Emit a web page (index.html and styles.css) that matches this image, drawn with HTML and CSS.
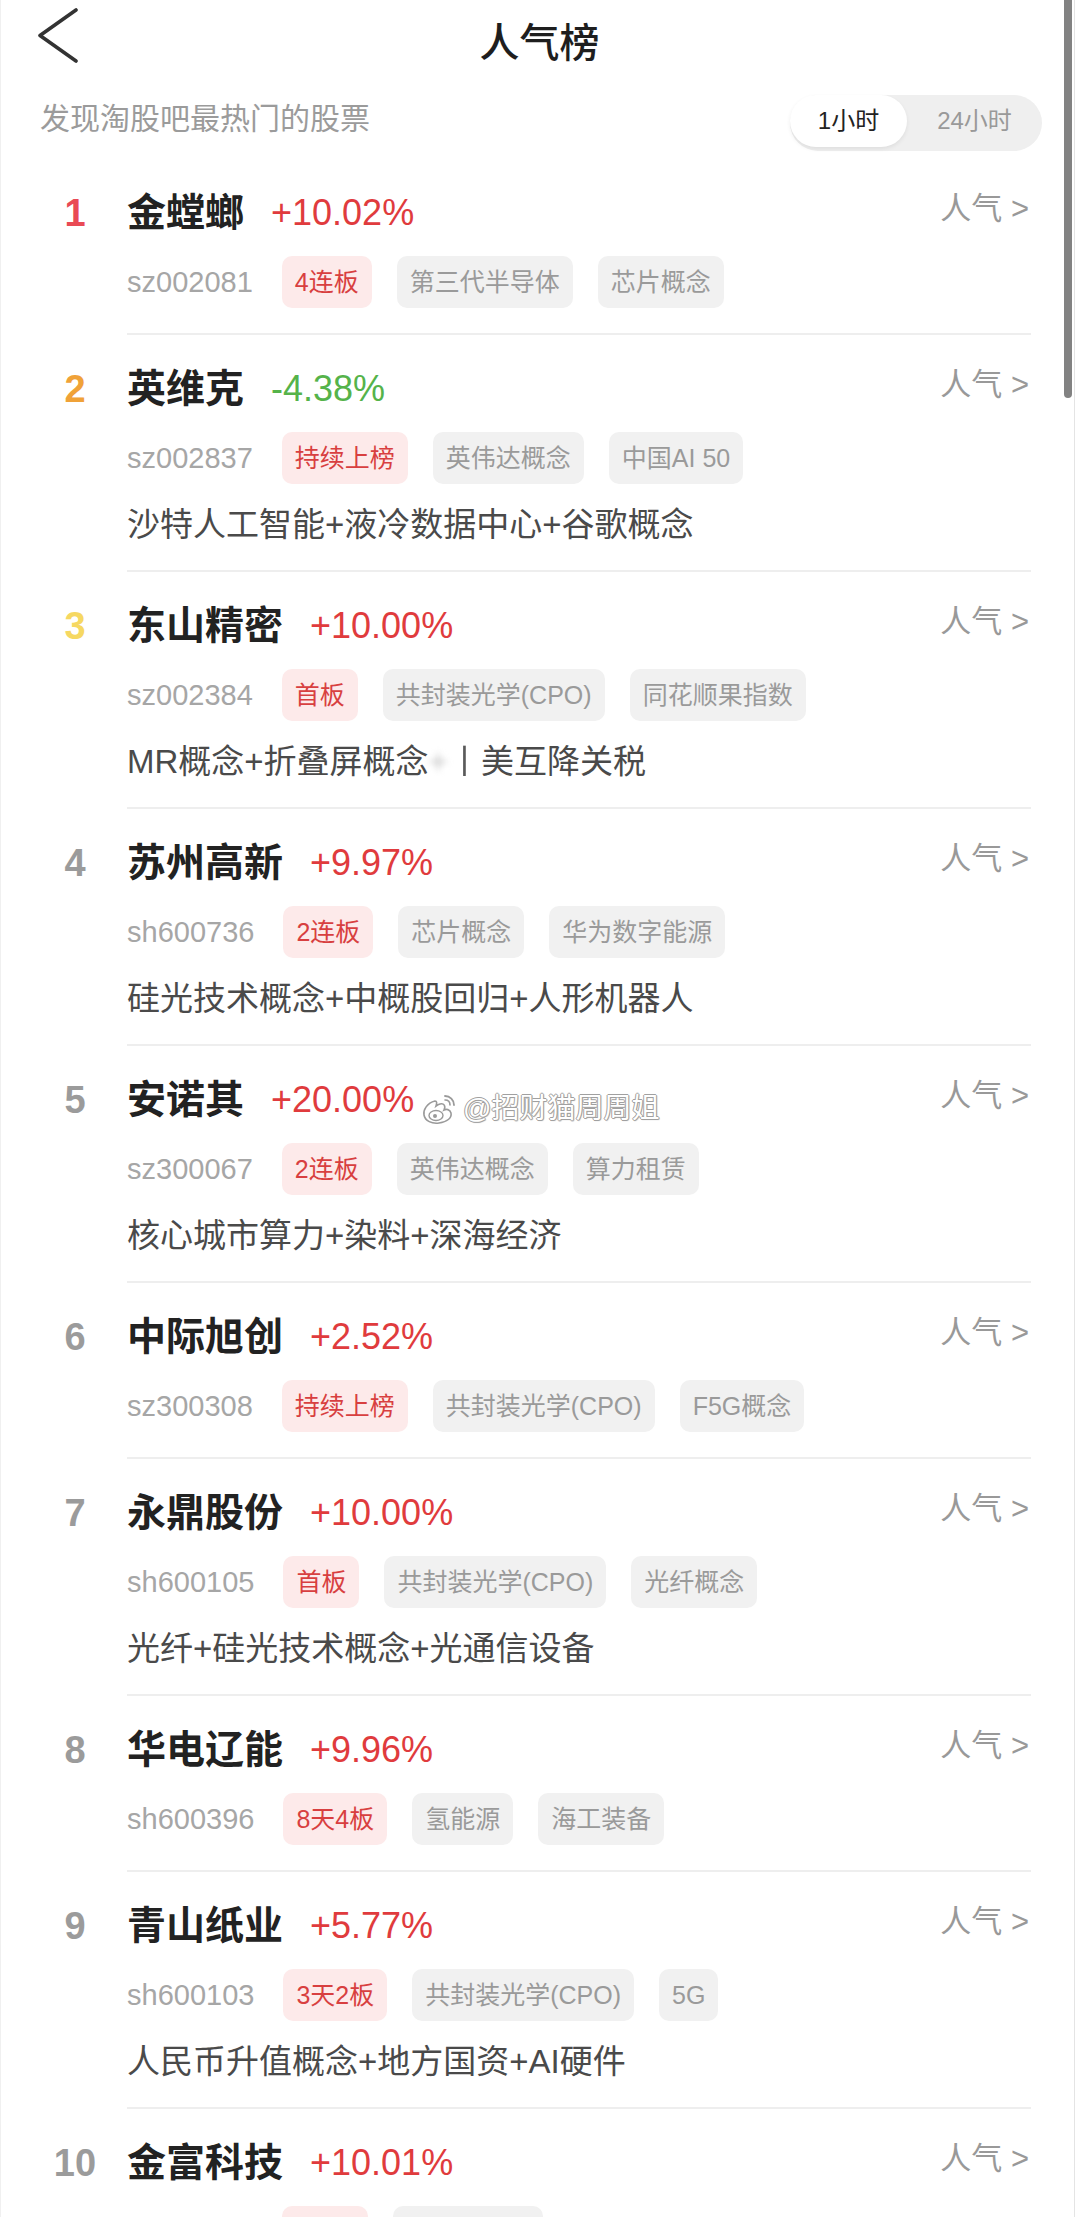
FILE: index.html
```html
<!DOCTYPE html>
<html lang="zh-CN">
<head>
<meta charset="utf-8">
<title>人气榜</title>
<link rel="stylesheet" href="styles.css">
</head>
<body>
<div class="page">
  <header class="topbar">
    <svg class="back" viewBox="0 0 42 56" aria-hidden="true"><path d="M39 2 L3 27.5 L39 53" fill="none" stroke="#333" stroke-width="3.6" stroke-linecap="round" stroke-linejoin="round"/></svg>
    <h1 class="title">人气榜</h1>
    <span class="spacer"></span>
  </header>
  <div class="subbar">
    <p class="subtitle">发现淘股吧最热门的股票</p>
    <div class="toggle"><span class="opt active">1小时</span><span class="opt">24小时</span></div>
  </div>
  <ul class="list">
    <li class="item">
      <span class="rank r1">1</span>
      <div class="body">
        <div class="head"><span class="name">金螳螂</span><span class="pct up">+10.02%</span><span class="pop">人气 &gt;</span></div>
        <div class="meta"><span class="code">sz002081</span><span class="tag hot">4连板</span><span class="tag">第三代半导体</span><span class="tag">芯片概念</span></div>
      </div>
    </li>
    <li class="item">
      <span class="rank r2">2</span>
      <div class="body">
        <div class="head"><span class="name">英维克</span><span class="pct down">-4.38%</span><span class="pop">人气 &gt;</span></div>
        <div class="meta"><span class="code">sz002837</span><span class="tag hot">持续上榜</span><span class="tag">英伟达概念</span><span class="tag">中国AI 50</span></div>
        <p class="concept">沙特人工智能+液冷数据中心+谷歌概念</p>
      </div>
    </li>
    <li class="item">
      <span class="rank r3">3</span>
      <div class="body">
        <div class="head"><span class="name">东山精密</span><span class="pct up">+10.00%</span><span class="pop">人气 &gt;</span></div>
        <div class="meta"><span class="code">sz002384</span><span class="tag hot">首板</span><span class="tag">共封装光学(CPO)</span><span class="tag">同花顺果指数</span></div>
        <p class="concept">MR概念+折叠屏概念<span class="smudge">+</span><span class="smudge-bar">丨</span>美互降关税</p>
      </div>
    </li>
    <li class="item">
      <span class="rank">4</span>
      <div class="body">
        <div class="head"><span class="name">苏州高新</span><span class="pct up">+9.97%</span><span class="pop">人气 &gt;</span></div>
        <div class="meta"><span class="code">sh600736</span><span class="tag hot">2连板</span><span class="tag">芯片概念</span><span class="tag">华为数字能源</span></div>
        <p class="concept">硅光技术概念+中概股回归+人形机器人</p>
      </div>
    </li>
    <li class="item">
      <span class="rank">5</span>
      <div class="body">
        <div class="head"><span class="name">安诺其</span><span class="pct up">+20.00%</span><span class="pop">人气 &gt;</span></div>
        <div class="meta"><span class="code">sz300067</span><span class="tag hot">2连板</span><span class="tag">英伟达概念</span><span class="tag">算力租赁</span></div>
        <p class="concept">核心城市算力+染料+深海经济</p>
      </div>
    </li>
    <li class="item">
      <span class="rank">6</span>
      <div class="body">
        <div class="head"><span class="name">中际旭创</span><span class="pct up">+2.52%</span><span class="pop">人气 &gt;</span></div>
        <div class="meta"><span class="code">sz300308</span><span class="tag hot">持续上榜</span><span class="tag">共封装光学(CPO)</span><span class="tag">F5G概念</span></div>
      </div>
    </li>
    <li class="item">
      <span class="rank">7</span>
      <div class="body">
        <div class="head"><span class="name">永鼎股份</span><span class="pct up">+10.00%</span><span class="pop">人气 &gt;</span></div>
        <div class="meta"><span class="code">sh600105</span><span class="tag hot">首板</span><span class="tag">共封装光学(CPO)</span><span class="tag">光纤概念</span></div>
        <p class="concept">光纤+硅光技术概念+光通信设备</p>
      </div>
    </li>
    <li class="item">
      <span class="rank">8</span>
      <div class="body">
        <div class="head"><span class="name">华电辽能</span><span class="pct up">+9.96%</span><span class="pop">人气 &gt;</span></div>
        <div class="meta"><span class="code">sh600396</span><span class="tag hot">8天4板</span><span class="tag">氢能源</span><span class="tag">海工装备</span></div>
      </div>
    </li>
    <li class="item">
      <span class="rank">9</span>
      <div class="body">
        <div class="head"><span class="name">青山纸业</span><span class="pct up">+5.77%</span><span class="pop">人气 &gt;</span></div>
        <div class="meta"><span class="code">sh600103</span><span class="tag hot">3天2板</span><span class="tag">共封装光学(CPO)</span><span class="tag">5G</span></div>
        <p class="concept">人民币升值概念+地方国资+AI硬件</p>
      </div>
    </li>
    <li class="item">
      <span class="rank">10</span>
      <div class="body">
        <div class="head"><span class="name">金富科技</span><span class="pct up">+10.01%</span><span class="pop">人气 &gt;</span></div>
        <div class="meta"><span class="code code-blank"></span><span class="tag hot tag-blank-s"></span><span class="tag tag-blank-l"></span></div>
      </div>
    </li>
  </ul>

  <div class="watermark">
    <svg class="wb" viewBox="0 0 36 34" aria-hidden="true">
      <path d="M14 9 C6 11 2 18 3 23 C4 29 11 32 18 31 C26 30 31 26 30 21 C29 17 25 17 23 18 C25 14 23 11 19 12 C17 12.5 15 14 15 14 C16 11 16 9 14 9 Z" fill="#fff" stroke="#9a9a9a" stroke-width="1.6"/>
      <ellipse cx="15" cy="23.5" rx="7" ry="5" fill="#fff" stroke="#9a9a9a" stroke-width="1.4"/>
      <circle cx="14" cy="24" r="2" fill="#9a9a9a"/>
      <path d="M24 4 C29 4 33 8 33 13" fill="none" stroke="#9a9a9a" stroke-width="1.8" stroke-linecap="round"/>
      <path d="M24 8 C27 8 29 10 29 13" fill="none" stroke="#9a9a9a" stroke-width="1.6" stroke-linecap="round"/>
    </svg>
    <span class="wm-text">@招财猫周周姐</span>
  </div>

  <div class="scrollbar"></div>
</div>
</body>
</html>
```

FILE: styles.css
```css
html, body {
  margin: 0;
  padding: 0;
  background: #ffffff;
}

body {
  font-family: "Liberation Sans", "Noto Sans CJK SC", sans-serif;
  color: #222;
}

.page {
  position: relative;
  width: 1075px;
  height: 2217px;
  overflow: hidden;
  box-sizing: border-box;
  border-left: 1px solid #f0f0f0;
  border-right: 1px solid #e4e4e4;
  background: #fff;
}

/* ---------- top bar ---------- */
.topbar {
  display: grid;
  grid-template-columns: 1fr auto 1fr;
  height: 80px;
}

.back {
  width: 42px;
  height: 56px;
  margin: 8px 0 0 36px;
}

.title {
  margin: 0;
  font-size: 40px;
  font-weight: 500;
  line-height: 80px;
  color: #1e1e1e;
  font-family: "Noto Sans CJK SC", sans-serif;
  padding-left: 4px;
}

/* ---------- sub bar ---------- */
.subbar {
  display: flex;
  justify-content: space-between;
  align-items: flex-start;
  padding: 0 32px 5px 39px;
}

.subtitle {
  margin: 19px 0 0;
  font-size: 30px;
  line-height: 40px;
  color: #9b9b9b;
}

.toggle {
  margin-top: 15px;
  margin-bottom: 3px;
  display: flex;
  width: 252px;
  height: 56px;
  background: #efefef;
  border-radius: 28px;
}

.opt {
  font-size: 24px;
  line-height: 52px;
  color: #999;
  text-align: center;
  flex: 1;
}

.opt.active {
  flex: 0 0 117px;
  height: 52px;
  background: #fff;
  color: #222;
  border-radius: 26px;
  box-shadow: 0 2px 4px rgba(0, 0, 0, 0.07);
}

/* ---------- list ---------- */
.list {
  list-style: none;
  margin: 0;
  padding: 0;
}

.item {
  display: grid;
  grid-template-columns: 126px 1fr;
}

.rank {
  padding: 28px 0 0 22px;
  text-align: center;
  font-size: 38px;
  font-weight: 700;
  line-height: 52px;
  color: #9b9b9b;
}

.rank.r1 { color: #e94a55; }
.rank.r2 { color: #f0a238; }
.rank.r3 { color: #f6d862; }

.body {
  margin-right: 43px;
  padding: 28px 0 25px;
  border-bottom: 2px solid #eeeeee;
}

.head {
  display: flex;
  align-items: center;
  height: 52px;
}

.name {
  font-size: 39px;
  font-weight: 700;
  line-height: 52px;
  color: #222;
}

.pct {
  margin-left: 27px;
  font-size: 36px;
  line-height: 52px;
}

.pct.up { color: #e03b3d; }
.pct.down { color: #55b34a; }

.pop {
  margin-left: auto;
  align-self: flex-start;
  margin-top: 2px;
  font-size: 31px;
  line-height: 40px;
  color: #999;
  margin-right: 2px;
}

.meta {
  display: flex;
  align-items: center;
  gap: 25px;
  height: 52px;
  margin-top: 17px;
}

.code {
  font-size: 29px;
  color: #a6a6a6;
  margin-right: 4px;
}

.code-blank {
  width: 126px;
  height: 30px;
}

.tag {
  height: 52px;
  line-height: 52px;
  padding: 0 13px;
  border-radius: 10px;
  font-size: 25px;
  background: #f1f1f1;
  color: #9a9a9a;
}

.tag.hot {
  background: #fdeaea;
  color: #d83f40;
}

.tag-blank-s {
  width: 60px;
}

.tag-blank-l {
  width: 124px;
}

.concept {
  margin: 20px 0 0;
  font-size: 33px;
  line-height: 41px;
  color: #4a4a4a;
}

.smudge {
  color: #c8c8c8;
  filter: blur(3px);
}

.smudge-bar {
  color: #5a5a5a;
  filter: blur(0.6px);
}

/* ---------- overlays ---------- */
.watermark {
  position: absolute;
  left: 420px;
  top: 1091px;
  display: flex;
  align-items: center;
  gap: 6px;
}

.wb {
  width: 36px;
  height: 34px;
}

.wm-text {
  font-size: 28px;
  line-height: 36px;
  color: #fff;
  text-shadow:
    1px 0 0 #a0a0a0, -1px 0 0 #a0a0a0,
    0 1px 0 #a0a0a0, 0 -1px 0 #a0a0a0,
    1px 1px 1px #b0b0b0;
}

.scrollbar {
  position: absolute;
  top: 0;
  left: 1063px;
  width: 8px;
  height: 398px;
  background: #828282;
  border-radius: 0 0 4px 4px;
}
```
